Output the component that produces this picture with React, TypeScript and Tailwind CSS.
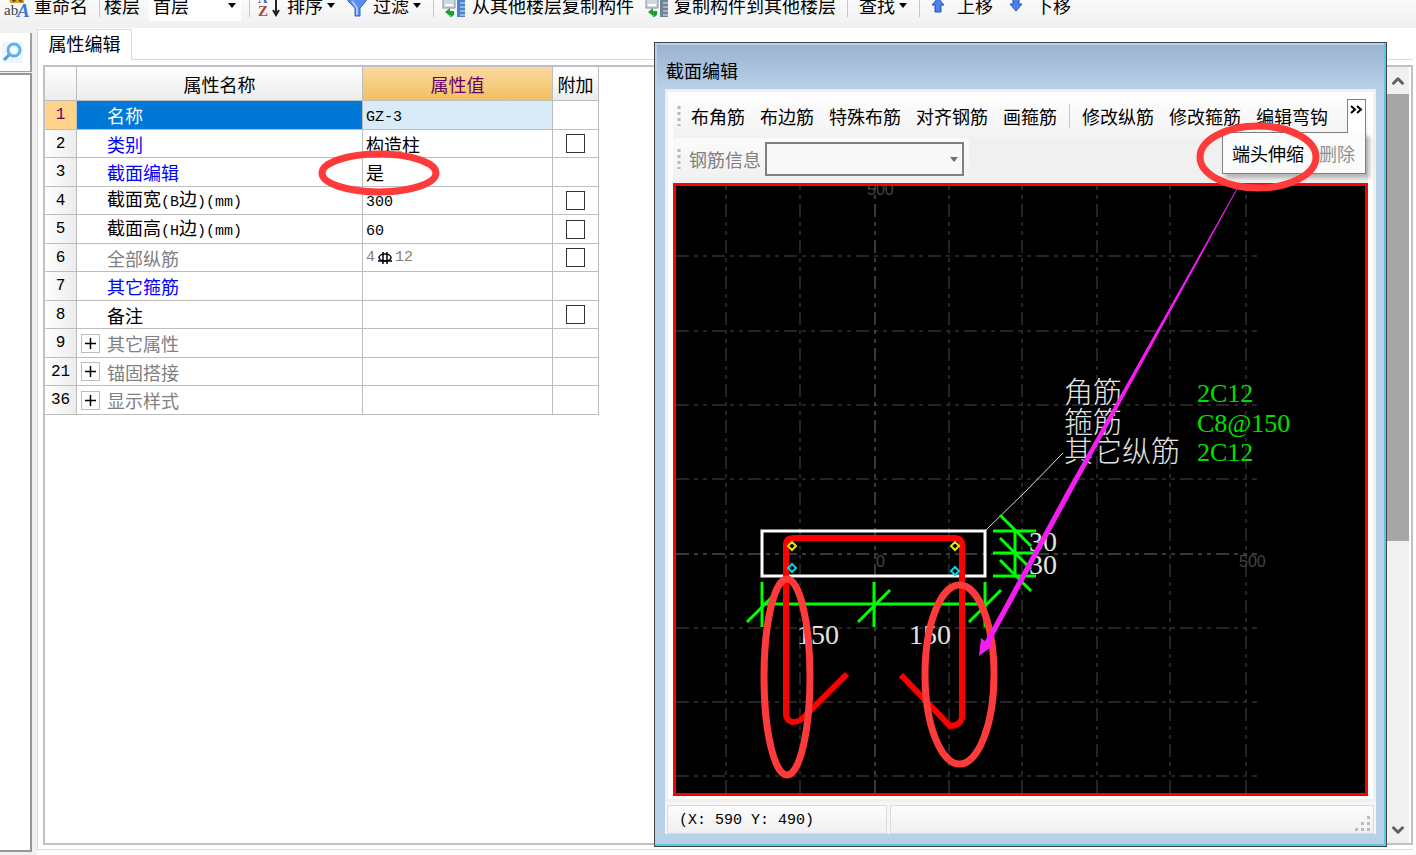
import type { ReactNode } from 'react';
import { ChevronDown, ChevronUp } from 'lucide-react';

type Row = {
  no: number;
  name: string;
  value?: string;
  tone: string;
  check?: boolean;
  group?: boolean;
};

const rows: Row[] = [
  { no: 1, name: '名称', value: 'GZ-3', tone: 'text-white' },
  { no: 2, name: '类别', value: '构造柱', tone: 'text-[#0000ff]', check: true },
  { no: 3, name: '截面编辑', value: '是', tone: 'text-[#0000ff]' },
  { no: 4, name: '截面宽(B边)(mm)', value: '300', tone: 'text-black', check: true },
  { no: 5, name: '截面高(H边)(mm)', value: '60', tone: 'text-black', check: true },
  { no: 6, name: '全部纵筋', value: '4#12', tone: 'text-[#808080]', check: true },
  { no: 7, name: '其它箍筋', tone: 'text-[#0000ff]' },
  { no: 8, name: '备注', tone: 'text-black', check: true },
  { no: 9, name: '其它属性', tone: 'text-[#808080]', group: true },
  { no: 21, name: '锚固搭接', tone: 'text-[#808080]', group: true },
  { no: 36, name: '显示样式', tone: 'text-[#808080]', group: true },
];

const gridX = [726, 800, 949, 1022, 1097, 1170, 1246];
const gridY = [256, 331, 405, 479, 628, 702, 776];

function Caret({ className = '' }: { className?: string }) {
  return (
    <svg width="8" height="5" viewBox="0 0 8 5" className={className}>
      <path d="M0 0h8L4 5z" fill="currentColor" />
    </svg>
  );
}

function Separator({ className = '' }: { className?: string }) {
  return <span className={`h-6 w-px flex-none bg-[#c8c8c8] ${className}`} />;
}

function Tool({ children, className = '' }: { children: ReactNode; className?: string }) {
  return (
    <button className={`flex flex-none items-center whitespace-nowrap ${className}`}>{children}</button>
  );
}

// Latin characters take half the width of a Chinese one
function Mixed({ text }: { text: string }) {
  return (
    <>
      {text.split(/([\x20-\x7e]+)/).map((part, i) =>
        i % 2 ? (
          <span key={i} className="font-['Liberation_Mono',monospace] text-[15px]">
            {part}
          </span>
        ) : (
          part
        ),
      )}
    </>
  );
}

function RenameIcon() {
  return (
    <svg width="26" height="26" viewBox="0 0 26 26">
      <path d="M4 2h16v9H6z" fill="#d9a52c" />
      <path d="M6 5l4 4 3-3 5 4" stroke="#6b4d12" fill="none" strokeWidth="2" />
      <text x="0" y="23" fontSize="15" fontFamily="Liberation Serif" fill="#444">ab</text>
      <text x="13" y="25" fontSize="19" fontWeight="700" fontStyle="italic" fontFamily="Liberation Serif" fill="#3f74d0">A</text>
    </svg>
  );
}

function SortIcon() {
  return (
    <svg width="24" height="26" viewBox="0 0 24 26">
      <text x="1" y="11" fontSize="13" fontWeight="700" fontFamily="Liberation Serif" fill="#3b5fb0">A</text>
      <text x="1" y="24" fontSize="15" fontWeight="700" fontFamily="Liberation Serif" fill="#a94444">Z</text>
      <path d="M19 2v19M16 18l3 5 3-5" stroke="#222" strokeWidth="2" fill="none" />
    </svg>
  );
}

function FilterIcon() {
  return (
    <svg width="20" height="24" viewBox="0 0 20 24">
      <path d="M1 5h18v3l-6 7v8H8v-8L1 8z" fill="#5b8cf0" stroke="#2f5fd0" />
      <path d="M5 8l5 7v7" stroke="#a9c5ff" strokeWidth="2" fill="none" />
    </svg>
  );
}

function CopyIcon({ tone }: { tone: string }) {
  return (
    <svg width="24" height="28" viewBox="0 0 24 28">
      <rect x="1" y="4" width="12" height="13" fill="#cfd8e2" stroke="#8a949e" />
      <path d="M3 14h8" stroke="#fff" strokeWidth="2" />
      <rect x="15" y="4" width="8" height="22" fill={tone} />
      <path d="M18 8h5M18 12h5M18 16h5M18 20h5M18 24h5" stroke="#dfe9f5" strokeWidth="1" />
      <path d="M3 21l5-4v3h4c1 4-1 6-5 6 2-1 2-1 1-2v1z" fill="#18a030" />
    </svg>
  );
}

function ArrowIcon({ down = false }: { down?: boolean }) {
  return (
    <svg width="14" height="18" viewBox="0 0 14 18" className="flex-none">
      <path
        d={down ? 'M4 2h6v6h3l-6 7-6-7h3z' : 'M4 16h6V9h3L7 2 1 9h3z'}
        fill="#4c83e8"
        stroke="#2450b8"
      />
    </svg>
  );
}

function TopToolbar() {
  return (
    <header className="h-7 flex-none overflow-hidden bg-linear-to-b from-[#fafafa] to-[#f0f0f0]">
      <div className="-mt-[9px] flex h-7 items-center pl-1">
        <Tool className="gap-1"><RenameIcon />重命名</Tool>
        <Separator className="mr-1 ml-[11px]" />
        <label htmlFor="floor" className="flex-none">楼层</label>
        <div className="relative ml-[9px] flex h-8 w-[92px] flex-none items-center bg-white">
          <select id="floor" className="w-full appearance-none bg-transparent pl-1">
            <option>首层</option>
          </select>
          <Caret className="pointer-events-none absolute right-[5px]" />
        </div>
        <Separator className="mr-[7px] ml-2" />
        <Tool className="gap-[6px]"><SortIcon />排序<Caret className="-ml-[2px]" /></Tool>
        <Tool className="ml-3 gap-[6px]"><FilterIcon />过滤<Caret className="-ml-[2px]" /></Tool>
        <Separator className="mr-2 ml-3" />
        <Tool className="gap-[6px]"><CopyIcon tone="#4a86d0" />从其他楼层复制构件</Tool>
        <Tool className="ml-[11px] gap-[5px]"><CopyIcon tone="#6d8598" />复制构件到其他楼层</Tool>
        <Separator className="mr-[11px] ml-[11px]" />
        <Tool className="gap-1">查找<Caret /></Tool>
        <Separator className="mr-[11px] ml-3" />
        <Tool className="gap-3"><ArrowIcon />上移</Tool>
        <Tool className="ml-4 gap-3"><ArrowIcon down />下移</Tool>
      </div>
    </header>
  );
}

function SearchPane() {
  return (
    <aside className="flex w-8 flex-none flex-col pt-[5px] pb-[3px]">
      <button aria-label="搜索" className="flex h-[39px] items-center justify-center border-r-2 border-b border-[#a0a0a0] bg-white pr-[6px]">
        <svg width="21" height="21" viewBox="0 0 21 21">
          <rect width="21" height="21" fill="#eef6fc" />
          <circle cx="12" cy="8" r="6" fill="#f4fbff" stroke="#62b0ea" strokeWidth="3" />
          <path d="M7 13l-5 5" stroke="#4b9fe0" strokeWidth="3" />
        </svg>
      </button>
      <div className="mt-px flex-1 border-t-2 border-r-2 border-b-2 border-[#90969b] bg-white" />
    </aside>
  );
}

function PropertyValue({ row }: { row: Row }) {
  if (row.no === 6) {
    return (
      <span className="flex items-center font-['Liberation_Mono',monospace] text-[15px]">
        4
        <svg width="20" height="16" viewBox="0 0 20 16" className="flex-none">
          <ellipse cx="10" cy="7.5" rx="6" ry="3.5" stroke="#000" strokeWidth="1.5" fill="none" />
          <path d="M8 2v12M12 2v12M3 11h14" stroke="#000" strokeWidth="1.5" fill="none" />
        </svg>
        12
      </span>
    );
  }
  return <Mixed text={row.value ?? ''} />;
}

function PropertyTable() {
  return (
    <table className="w-[554px] table-fixed border-separate border-spacing-0 self-start leading-5">
      <colgroup>
        <col className="w-8" />
        <col className="w-[286px]" />
        <col className="w-[190px]" />
        <col className="w-[46px]" />
      </colgroup>
      <thead>
        <tr className="h-[34px] [&>th]:border-r [&>th]:border-b [&>th]:border-[#bdbdbd] [&>th]:p-0 [&>th]:font-normal">
          <th className="bg-linear-to-b from-white to-[#ececec]" />
          <th className="bg-linear-to-b from-white to-[#ececec]">属性名称</th>
          <th className="bg-linear-to-b from-[#fbd9a0] to-[#f0c060] text-[#660066]">属性值</th>
          <th className="bg-linear-to-b from-white to-[#ececec] whitespace-nowrap">附加</th>
        </tr>
      </thead>
      <tbody>
        {rows.map((row) => {
          const active = row.no === 1;
          return (
            <tr key={row.no} className="odd:h-[29px] even:h-[28px] [&>td]:border-r [&>td]:border-b [&>td]:border-[#bdbdbd] [&>td]:py-0">
              <td className={`px-0 text-center font-['Liberation_Mono',monospace] text-base leading-5 ${active ? 'bg-[#ffd48a] text-[#660066]' : 'bg-linear-to-r from-white to-[#ececec]'}`}>
                {row.no}
              </td>
              <td className={`px-0 ${row.tone} ${active ? 'bg-[#0078d7]' : ''}`}>
                <div className="flex items-center pl-1">
                  <span className="w-[26px] flex-none">
                    {row.group && (
                      <button aria-label={`展开${row.name}`} className="flex size-[19px] items-center justify-center border border-[#bdbdbd] bg-white">
                        <svg width="11" height="11" viewBox="0 0 11 11">
                          <path d="M5.5 0v11M0 5.5h11" stroke="#000" strokeWidth="1.5" />
                        </svg>
                      </button>
                    )}
                  </span>
                  <span><Mixed text={row.name} /></span>
                </div>
              </td>
              <td className={`relative px-[3px] ${active ? 'bg-[#d9eaf9]' : ''} ${row.no === 6 ? 'text-[#808080]' : ''}`}>
                <PropertyValue row={row} />
                {row.no === 3 && (
                  <svg width="122" height="46" viewBox="0 0 122 46" className="pointer-events-none absolute -top-2 -left-[45px] z-10">
                    <ellipse cx="61" cy="23" rx="57" ry="19" fill="none" stroke="#fe3a3a" strokeWidth="7" />
                  </svg>
                )}
              </td>
              <td className="px-0">
                {row.check && (
                  <input type="checkbox" aria-label={row.name} className="mx-auto block size-[19px] appearance-none border border-[#333] bg-white" />
                )}
              </td>
            </tr>
          );
        })}
      </tbody>
    </table>
  );
}

function SectionDrawing() {
  return (
    <svg width="690" height="607" viewBox="676 186 690 607" className="block">
      <g stroke="#303030" strokeWidth="1.5" strokeDasharray="13 5 4 5 4 5" fill="none">
        {gridX.map((x) => (
          <path key={x} d={`M${x} 793V186`} />
        ))}
        {gridY.map((y) => (
          <path key={y} d={`M676 ${y}H1257`} />
        ))}
        <path d="M875 793V186M676 554H1257" stroke="#4c4c4c" />
      </g>
      <g fill="#444" fontFamily="Liberation Sans" fontSize="16">
        <text x="867" y="195">500</text>
        <text x="876" y="567">0</text>
        <text x="1239" y="567">500</text>
      </g>
      <path d="M986 530L1024 493L1063 453" stroke="#ddd" fill="none" />
      <rect x="762" y="531" width="223" height="45" fill="none" stroke="#fff" strokeWidth="3" />
      <g stroke="#00ff00" strokeWidth="3" fill="none">
        <path d="M762 604H985M762 582v45M874 582v45M985 582v45" />
        <path d="M747 622l32-32M858 622l32-32M969 622l32-32" />
        <path d="M993 531h43M993 553h43M993 576h43M1015 531v45" />
        <path d="M1000 515l31 31M1000 538l31 31M1000 560l31 31" />
      </g>
      <g fill="#e4e4e4" fontFamily="Liberation Serif" fontSize="28">
        <text x="797" y="644">150</text>
        <text x="909" y="644">150</text>
        <text x="1029" y="551">30</text>
        <text x="1029" y="574">30</text>
      </g>
      <path
        d="M847 674L804 717Q800 722 792 722Q786 720 786 714V545Q786 538 793 538H955Q962 538 962 545V718Q960 726 950 726L901 675"
        stroke="#ff0000"
        strokeWidth="6"
        fill="none"
      />
      <g fill="none" strokeWidth="2">
        <path d="M792 542l4 4-4 4-4-4zM955 542l4 4-4 4-4-4z" stroke="#e8e800" />
        <path d="M792 564l4 4-4 4-4-4zM955 567l4 4-4 4-4-4z" stroke="#00d8e0" />
      </g>
      <g fill="#e4e4e4" fontFamily="Noto Sans CJK SC" fontSize="29" fontWeight="300">
        <text x="1064" y="403">角筋</text>
        <text x="1064" y="433">箍筋</text>
        <text x="1064" y="462">其它纵筋</text>
      </g>
      <g fill="#00e000" fontFamily="Liberation Serif" fontSize="26">
        <text x="1197" y="402">2C12</text>
        <text x="1197" y="432">C8@150</text>
        <text x="1197" y="461">2C12</text>
      </g>
    </svg>
  );
}

function Markup() {
  return (
    <svg width="733" height="805" viewBox="654 42 733 805" className="pointer-events-none absolute -top-px -left-px">
      <g fill="none" stroke="#fe3a3a" strokeWidth="7">
        <ellipse cx="1258" cy="157" rx="58" ry="31" />
        <ellipse cx="787" cy="677" rx="23" ry="98" />
        <ellipse cx="959.5" cy="674.5" rx="34.5" ry="89.5" />
      </g>
      <path d="M1238 188L1073 490L990 643L994 645L979 656L981 638L985 641L1067 490L1237 188z" fill="#f31df3" />
    </svg>
  );
}

function Grip() {
  return (
    <svg width="4" height="22" viewBox="0 0 4 22" className="flex-none">
      <path d="M2 1v20" stroke="#b8b8b8" strokeWidth="3" strokeDasharray="3 3" />
    </svg>
  );
}

function SectionDialog() {
  return (
    <section className="absolute top-[42px] right-[29px] bottom-2 flex w-[733px] flex-col border border-[#404448] bg-[#b9d0e9] px-[10px] pb-[12px] shadow-[inset_-2px_-2px_0_#58cbe4]">
      <h2 className="-mx-[8px] mt-[2px] h-[44px] flex-none bg-linear-to-b from-[#9ab3cf] to-[#b9d0e9] pt-[13px] pl-[9px] leading-6">截面编辑</h2>
      <div className="border-[3px] border-[#f0f0f0] bg-white px-[5px] pt-[6px] pb-[3px]">
        <div className="relative bg-[#f0f0f0]">
          <div className="flex h-[40px] items-center gap-[15px] bg-linear-to-b from-[#fdfdfd] to-[#f2f2f2] pb-1 pl-1">
            <Grip />
            <Tool className="-ml-[5px]">布角筋</Tool>
            <Tool>布边筋</Tool>
            <Tool>特殊布筋</Tool>
            <Tool>对齐钢筋</Tool>
            <Tool>画箍筋</Tool>
            <Separator className="-mx-[3px]" />
            <Tool>修改纵筋</Tool>
            <Tool>修改箍筋</Tool>
            <Tool>编辑弯钩</Tool>
          </div>
          <div className="flex h-[45px] w-[296px] items-center rounded bg-linear-to-b from-[#fbfbfb] to-[#f0f0f0] pb-[3px] pl-1">
            <Grip />
            <label htmlFor="rebar" className="ml-2 text-[#808080]">钢筋信息</label>
            <div className="relative ml-1 flex h-[34px] w-[199px] items-center">
              <select id="rebar" className="size-full appearance-none border-2 border-[#808080] bg-[#f8f8f8]">
                <option />
              </select>
              <Caret className="pointer-events-none absolute right-[6px] text-[#707070]" />
            </div>
          </div>
          <div className="absolute top-px right-[2px] flex flex-col items-end">
            <button aria-label="更多" className="relative z-10 -mb-px flex h-[34px] w-[19px] justify-center border border-b-0 border-[#808080] bg-white pt-[5px]">
              <svg width="13" height="9" viewBox="0 0 13 9">
                <path d="M1 1l4 3.5L1 8M7 1l4 3.5L7 8" stroke="#000" strokeWidth="2" fill="none" />
              </svg>
            </button>
            <div className="flex h-[42px] w-[144px] items-center gap-[15px] border border-[#808080] bg-[#fbfbfb] pl-[9px] shadow-[4px_4px_4px_rgba(0,0,0,0.25)]">
              <Tool>端头伸缩</Tool>
              <Tool className="text-[#909090]">删除</Tool>
            </div>
          </div>
        </div>
        <div className="overflow-hidden border-[3px] border-[#ff0000] bg-black">
          <SectionDrawing />
        </div>
      </div>
      <footer className="flex flex-1 gap-[3px] bg-[#f6f6f6] px-[2px] pt-[3px] font-['Liberation_Mono',monospace] text-[15px]">
        <p className="flex w-[220px] items-center border border-[#dcdcdc] bg-linear-to-b from-[#fcfcfc] to-[#f0f0f0] pt-[3px] pl-[11px] whitespace-pre">(X: 590 Y: 490)</p>
        <div className="flex flex-1 items-end justify-end border border-[#dcdcdc] bg-linear-to-b from-[#fcfcfc] to-[#f0f0f0]">
          <svg width="18" height="18" viewBox="0 0 18 18">
            <path d="M12 1h3v3h-3zM12 7h3v3h-3zM6 7h3v3H6zM12 13h3v3h-3zM6 13h3v3H6zM0 13h3v3H0z" fill="#bcbcbc" />
          </svg>
        </div>
      </footer>
      <Markup />
    </section>
  );
}

export default function App() {
  return (
    <div className="relative flex h-screen flex-col overflow-hidden bg-[#f0f0f0] font-['Noto_Sans_CJK_SC',sans-serif] text-[18px] text-black">
      <TopToolbar />
      <div className="flex min-h-0 flex-1 bg-[#f0f0f0]">
        <SearchPane />
        <main className="ml-[5px] flex flex-1 flex-col bg-white pr-[3px] pb-[5px]">
          <div className="flex h-8 flex-none items-end border-b border-[#dcdcdc]">
            <button className="-mb-px flex h-[31px] w-[95px] items-center justify-center border border-b-0 border-[#dcdcdc] bg-white pb-1 leading-6">属性编辑</button>
          </div>
          <div className="flex flex-1 border-b border-l border-[#dcdcdc] pt-[5px] pb-1 pl-[5px]">
            <div className="flex flex-1 justify-between border-2 border-[#c0c0c6] pr-[2px]">
              <PropertyTable />
              <div className="flex w-[22px] flex-col items-center bg-[#f0f0f0] text-[#606060]">
                <button aria-label="向上滚动" className="flex h-[27px] items-center"><ChevronUp size={18} strokeWidth={4} /></button>
                <div className="h-[447px] w-full bg-[#a6a6a6]" />
                <button aria-label="向下滚动" className="mt-auto flex h-[27px] items-center"><ChevronDown size={18} strokeWidth={4} /></button>
              </div>
            </div>
          </div>
        </main>
      </div>
      <SectionDialog />
    </div>
  );
}
